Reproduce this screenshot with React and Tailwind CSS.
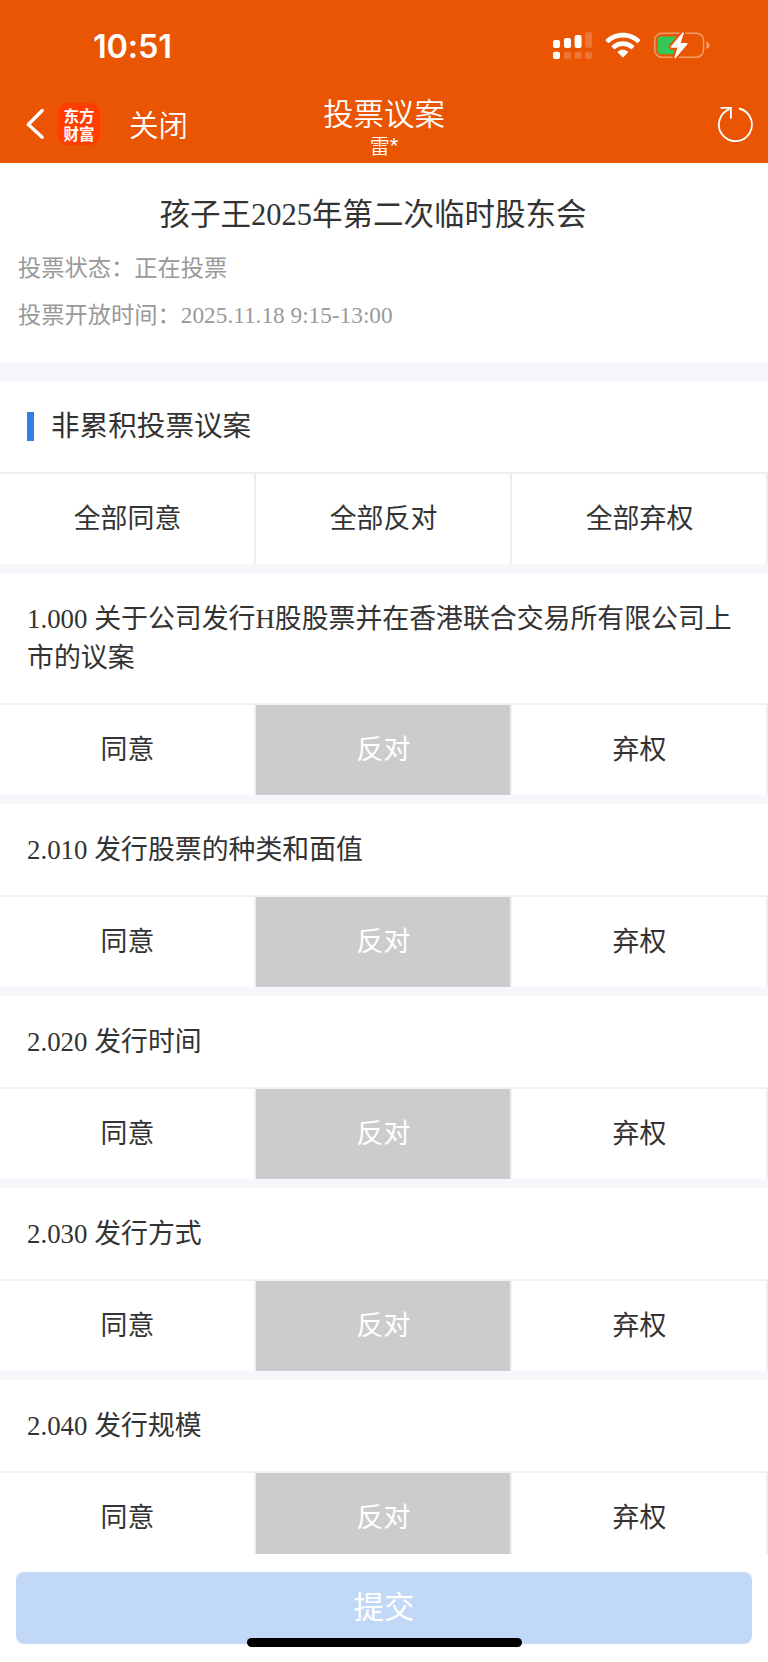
const proposals = [
  { id: '1.000', title: '关于公司发行H股股票并在香港联合交易所有限公司上市的议案' },
  { id: '2.010', title: '发行股票的种类和面值' },
  { id: '2.020', title: '发行时间' },
  { id: '2.030', title: '发行方式' },
  { id: '2.040', title: '发行规模' },
];

function StatusBar() {
  return (
    <div className="flex h-[86px] shrink-0 items-start justify-between pl-[93px] pr-[58px]">
      <div className="mt-[27px] font-['Inter',sans-serif] text-[32.5px] leading-[40px] font-semibold tracking-[-0.2px]">10:51</div>
      <svg className="mt-[28px]" width="160" height="36" viewBox="550 28 160 36" fill="#fff">
        <rect x="553" y="40" width="7" height="8" rx="2" />
        <rect x="564" y="38" width="7" height="10" rx="2" />
        <rect x="574.6" y="35" width="7" height="13" rx="2" />
        <rect x="585" y="32" width="7" height="16" rx="2" opacity=".2" />
        <rect x="553" y="51.7" width="7" height="7.3" rx="2" />
        <rect x="564" y="51.7" width="7" height="7.3" rx="2.5" opacity=".2" />
        <rect x="574.6" y="51.7" width="7" height="7.3" rx="2.5" opacity=".2" />
        <rect x="585" y="51.7" width="7" height="7.3" rx="2.5" opacity=".2" />
        <path d="M605.8 40.8a.9.9 0 0 1 0-1.3C614.800 30.500 631 30.500 640 39.500a.9.9 0 0 1 0 1.300l-2 2a.9.9 0 0 1-1.300 0C629.300 35.700 616.500 35.700 609.100 42.800a.9.9 0 0 1-1.300 0Z" />
        <path d="M611.900 46.900a.9.9 0 0 1 0-1.300C617.700 39.800 628.100 39.800 633.900 45.600a.9.9 0 0 1 0 1.300l-2 2a.9.9 0 0 1-1.300 0C626.300 44.900 619.500 44.900 615.200 48.900a.9.9 0 0 1-1.300 0Z" />
        <path d="M618 52.800a.9.9 0 0 1 0-1.300c2.800-2.300 7-2.300 9.800 0a.9.9 0 0 1 0 1.300l-4.300 4.300a.9.9 0 0 1-1.200 0Z" />
        <rect x="654.7" y="33.200" width="48.800" height="24" rx="7" fill="none" stroke="#fff" strokeWidth="1.500" opacity=".42" />
        <path d="M706.500 41.200v8c1.700-.7 3-2.200 3-4s-1.300-3.300-3-4Z" opacity=".45" />
        <path d="M661.500 36.500H676v17.800h-14.500a4 4 0 0 1-4-4v-9.800a4 4 0 0 1 4-4Z" fill="#34c759" />
        <path d="M682.400 32.700 670.800 46.500a.7.7 0 0 0 .5 1.200h6.200l-3 9.500c-.3.900.5 1.400 1.200.7l11.700-13.700a.7.7 0 0 0-.5-1.200h-6.200l3-9.500c.2-1-.6-1.500-1.300-.8Z" stroke="#ea5504" strokeWidth="4" paintOrder="stroke" strokeLinejoin="round" />
      </svg>
    </div>
  );
}

function NavBar() {
  return (
    <div className="grid grow grid-cols-[256px_256px_256px]">
      <div className="flex h-[75px] items-center pl-[25px]">
        <svg width="20" height="34" viewBox="0 0 20 34" fill="none" stroke="#fff" strokeWidth="3.4" strokeLinecap="round" strokeLinejoin="round">
          <path d="M17.200 3.500 3.300 17.500l13.900 12.700" />
        </svg>
        <div className="ml-[13px] flex h-[42px] w-[42px] flex-col items-center justify-center rounded-[9px] bg-[#ff3d00] text-[15.5px] leading-[18px] font-bold">
          <span>东方</span>
          <span>财富</span>
        </div>
        <span className="ml-[29px] pb-[2px] text-[29.5px] leading-[40px] font-[350]">关闭</span>
      </div>
      <div className="flex flex-col items-center pt-[6px]">
        <div className="text-[30.4px] leading-[40px] font-[350]">投票议案</div>
        <div className="flex text-[20px] leading-[28px] font-[350]">
          雷<span className="font-['Liberation_Sans',sans-serif] text-[22px]">*</span>
        </div>
      </div>
      <div className="flex h-[76px] items-center justify-end pr-[14px]">
        <svg width="38" height="38" viewBox="716 105 38 38" fill="none" stroke="#fff" strokeWidth="1.800">
          <path d="M739 108.500A16.500 16.500 0 1 1 729.500 109.200" />
          <path d="M720.500 107.900h10.400v10.800" />
        </svg>
      </div>
    </div>
  );
}

function ChoiceRow({ labels, selected }) {
  return (
    <div className="grid h-[90px] shrink-0 grid-cols-3">
      {labels.map((label, i) => (
        <button
          key={label}
          className={
            i === selected
              ? 'border-r-2 border-[#eeeeee] bg-[#cccccc] pt-[1px] pl-[1px] text-[26.9px] text-white'
              : 'border-r-2 border-[#eeeeee] bg-white pt-[1px] pl-[1px] text-[26.9px] text-[#333333]'
          }
        >
          {label}
        </button>
      ))}
    </div>
  );
}

function Proposal({ id, title }) {
  return (
    <section className="shrink-0 border-t-[9px] border-[#f6f7fa]">
      <h3 className="border-b-2 border-[#f0f0f0] px-[27px] pt-[27px] pb-[25px] text-[26.88px] leading-[39px]">
        {id} {title}
      </h3>
      <ChoiceRow labels={['同意', '反对', '弃权']} selected={1} />
    </section>
  );
}

export default function App() {
  return (
    <div className="relative flex h-[1662px] w-[768px] flex-col overflow-hidden bg-white font-['Liberation_Serif','Noto_Sans_CJK_SC',sans-serif] text-[#333333]">
      <header className="flex h-[163px] shrink-0 flex-col bg-[#ea5504] font-['Noto_Sans_CJK_SC',sans-serif] text-white">
        <StatusBar />
        <NavBar />
      </header>
      <main className="flex h-[1391px] shrink-0 flex-col overflow-hidden">
        <section className="h-[200px] shrink-0 px-[18px] pt-[28px]">
          <h1 className="pr-[22px] text-center text-[30.5px] leading-[48px]">孩子王2025年第二次临时股东会</h1>
          <p className="mt-[6px] text-[23.28px] leading-[47px] text-[#999999]">投票状态：正在投票</p>
          <p className="text-[23.28px] leading-[47px] text-[#999999]">投票开放时间：2025.11.18 9:15-13:00</p>
        </section>
        <div className="h-[18px] shrink-0 bg-[#f6f7fa]" />
        <div className="flex h-[93px] shrink-0 items-center border-b-2 border-[#eeeeee] pl-[27px]">
          <span className="h-[29px] w-[7px] bg-[#2f80e7]" />
          <h2 className="ml-[17px] pt-[2px] text-[28.6px]">非累积投票议案</h2>
        </div>
        <ChoiceRow labels={['全部同意', '全部反对', '全部弃权']} />
        {proposals.map((p) => (
          <Proposal key={p.id} id={p.id} title={p.title} />
        ))}
      </main>
      <footer className="flex grow flex-col px-4 pt-[18px]">
        <button className="h-[72px] rounded-[8px] bg-[#c2d8f7] pt-[2px] text-[30.5px] text-white">提交</button>
      </footer>
      <div className="absolute bottom-[15px] left-[247px] h-[9px] w-[275px] rounded-full bg-black" />
    </div>
  );
}
